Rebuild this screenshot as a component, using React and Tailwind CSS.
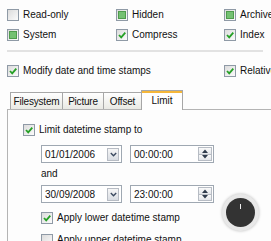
import React from 'react';

// Small XP-style checkbox: state is 'off', 'on' or 'mixed'
const Check = ({ state = 'off' }) => (
  <span className="relative flex h-[12px] w-[12px] shrink-0 items-center justify-center border border-[#8f9aa6] bg-gradient-to-br from-[#dcdcdc] to-[#fbfbfb]">
    {state === 'mixed' && <span className="h-[8px] w-[8px] border border-[#4f9b4d] bg-[#74c172]" />}
    {state === 'on' && (
      <svg width="10" height="10" viewBox="0 0 10 10">
        <path d="M2 5 L4.2 7.3 L8.3 2.6" fill="none" stroke="#25a025" strokeWidth="1.8" />
      </svg>
    )}
  </span>
);

const Option = ({ state, label, className = '' }) => (
  <div className={`flex items-center gap-[4px] whitespace-nowrap ${className}`}>
    <Check state={state} />
    <span className="leading-none">{label}</span>
  </div>
);

const Tab = ({ label, active, className = '' }) =>
  active ? (
    <div className={`relative z-10 -mb-px flex h-[20px] items-center justify-center border border-b-0 border-[#a7a7a7] bg-white shadow-[inset_0_2px_0_#f5b73a] ${className}`}>
      {label}
    </div>
  ) : (
    <div className={`flex h-[17px] items-center justify-center border border-b-0 border-[#a7a7a7] bg-gradient-to-b from-white to-[#e9e9e4] tracking-[-0.2px] ${className}`}>
      {label}
    </div>
  );

const DateField = ({ value }) => (
  <div className="flex h-[18px] w-[81px] items-center justify-between border border-[#9fa8b2] bg-white pl-[3px] pr-[2px]">
    <span>{value}</span>
    <span className="flex h-[13px] w-[12px] items-center justify-center border border-[#b7bcc4] bg-gradient-to-b from-[#f7f7f7] to-[#d9dde3]">
      <svg width="7" height="5" viewBox="0 0 7 5">
        <path d="M0.8 1 L3.5 3.7 L6.2 1" fill="none" stroke="#3b4a60" strokeWidth="1.4" />
      </svg>
    </span>
  </div>
);

const TimeField = ({ value }) => (
  <div className="flex h-[18px] w-[84px] items-center justify-between border border-[#9fa8b2] bg-white pl-[3px] pr-[1px]">
    <span>{value}</span>
    <span className="flex h-[14px] w-[14px] flex-col border border-[#b7bcc4]">
      <span className="flex flex-1 items-center justify-center bg-gradient-to-b from-[#fafafa] to-[#e2e5ea]">
        <svg width="6" height="4" viewBox="0 0 6 4"><path d="M0 4 L3 0.5 L6 4 Z" fill="#2e3a4c" /></svg>
      </span>
      <span className="flex flex-1 items-center justify-center border-t border-[#b7bcc4] bg-gradient-to-b from-[#fafafa] to-[#e2e5ea]">
        <svg width="6" height="4" viewBox="0 0 6 4"><path d="M0 0 L3 3.5 L6 0 Z" fill="#2e3a4c" /></svg>
      </span>
    </span>
  </div>
);

export default function App() {
  return (
    <div className="relative h-[241px] w-[271px] overflow-hidden bg-[#fdfdfd] pt-[9px] text-[10px] text-[#111] [font-family:'Liberation_Sans',Arial,sans-serif]">
      <div className="grid grid-cols-[109px_108px_60px] gap-y-[8px] pl-[7px]">
        <Option state="off" label="Read-only" />
        <Option state="mixed" label="Hidden" />
        <Option state="mixed" label="Archive" />
        <Option state="mixed" label="System" />
        <Option state="on" label="Compress" />
        <Option state="on" label="Index" />
      </div>

      <div className="ml-[7px] mr-[8px] mt-[9px] h-[2px] bg-[#e2e2e2]" />

      <div className="mt-[13px] grid grid-cols-[217px_60px] pl-[7px]">
        <Option state="on" label="Modify date and time stamps" />
        <Option state="on" label="Relative" />
      </div>

      <div className="ml-[7px] mt-[13px]">
        <div className="flex items-end pl-[3px]">
          <Tab label="Filesystem" className="w-[53px]" />
          <Tab label="Picture" className="-ml-px w-[42px]" />
          <Tab label="Offset" className="-ml-px w-[39px]" />
          <Tab label="Limit" active className="-ml-px w-[42px]" />
        </div>
        <div className="h-[140px] border-l border-t border-[#b4b4b4] pl-[15px] pt-[14px]">
          <Option state="on" label="Limit datetime stamp to" />
          <div className="ml-[18px] mt-[9px] flex gap-[8px]">
            <DateField value="01/01/2006" />
            <TimeField value="00:00:00" />
          </div>
          <div className="ml-[18px] mt-[5px] leading-[12px]">and</div>
          <div className="ml-[18px] mt-[5px] flex gap-[8px]">
            <DateField value="30/09/2008" />
            <TimeField value="23:00:00" />
          </div>
          <Option state="on" label="Apply lower datetime stamp" className="ml-[18px] mt-[9px]" />
          <Option state="off" label="Apply upper datetime stamp" className="ml-[18px] mt-[10px]" />
        </div>
      </div>

      {/* floating round knob in the corner */}
      <div className="absolute left-[222px] top-[194px] flex h-[37px] w-[37px] items-center justify-center rounded-full bg-[#e8e8e8] shadow-[0_0_3px_#bbb]">
        <div className="relative h-[29px] w-[29px] rounded-full bg-[#333333]">
          <div className="absolute left-[14px] top-[6px] h-[5px] w-px bg-[#eeeeee]" />
        </div>
      </div>
    </div>
  );
}
